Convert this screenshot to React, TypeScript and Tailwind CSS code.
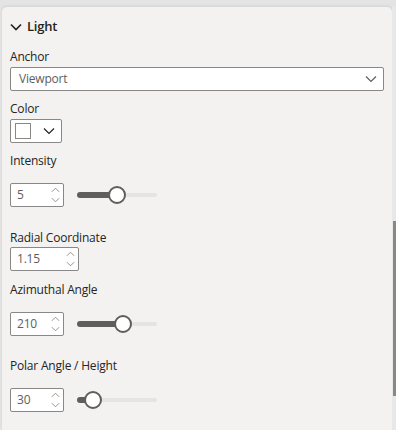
import { ReactNode } from "react";

const font = "font-['Segoe_UI','Open_Sans',sans-serif]";

function Chevron({ className, sw = 1.2 }: { className?: string; sw?: number }) {
  return (
    <svg viewBox="0 0 12 8" className={className} fill="none" stroke="currentColor" strokeWidth={sw}>
      <path d="M1 1.5 6 6.5 11 1.5" />
    </svg>
  );
}

function Label({ children, mt }: { children: ReactNode; mt: string }) {
  return (
    <div className={`h-[16px] text-[12px] leading-[19px] tracking-[-0.2px] text-[#252423] ${mt}`}>
      {children}
    </div>
  );
}

function Spin({ value, width }: { value: string; width: string }) {
  return (
    <div className={`relative h-[24px] ${width} border border-[#8a8886] rounded-[2px] bg-white flex items-center`}>
      <span className="pl-[6px] text-[12px] tracking-[-0.2px] text-[#605e5c]">{value}</span>
      <div className="absolute right-[3px] top-[3px] flex flex-col gap-[2px] text-[#8a8886]">
        <svg viewBox="0 0 10 6" className="w-[9px] h-[6px]" fill="none" stroke="currentColor" strokeWidth="1">
          <path d="M1 5 5 1 9 5" />
        </svg>
        <svg viewBox="0 0 10 6" className="w-[9px] h-[6px] mt-[2px]" fill="none" stroke="currentColor" strokeWidth="1">
          <path d="M1 1 5 5 9 1" />
        </svg>
      </div>
    </div>
  );
}

function Slider({ pos }: { pos: number }) {
  return (
    <div className="relative w-[80px] h-[16px] ml-[13px]">
      <div className="absolute left-0 right-0 top-[6px] h-[4px] rounded-full bg-[#e6e4e2]" />
      <div
        className="absolute left-0 top-[5px] h-[6px] rounded-full bg-[#605e5c]"
        style={{ width: pos }}
      />
      <div
        className="absolute top-0 w-[18px] h-[18px] -mt-[1px] rounded-full bg-white border-2 border-[#605e5c]"
        style={{ left: pos - 9 }}
      />
    </div>
  );
}

function SpinRow({ value, pos, mt }: { value: string; pos: number; mt: string }) {
  return (
    <div className={`flex items-center ${mt}`}>
      <Spin value={value} width="w-[54px]" />
      <Slider pos={pos} />
    </div>
  );
}

export default function App() {
  return (
    <div className={`w-[396px] h-[430px] bg-[#e4e4e4] flex pt-[7px] pl-[2px] overflow-hidden ${font}`}>
      <div className="w-[390px] h-full bg-[#f3f2f1] rounded-t-[5px] shadow-[0_-1px_3px_rgba(0,0,0,0.08)] pl-[8px] pr-[8px] pt-[12px]">
        <div className="flex items-center h-[16px] gap-[5px] text-[#252423]">
          <Chevron className="w-[12px] h-[8px]" sw={1.7} />
          <span className="text-[13px] font-semibold tracking-[-0.2px]">Light</span>
        </div>

        <Label mt="mt-[12px]">Anchor</Label>
        <div className="mt-[4px] h-[24px] w-[374px] border border-[#8a8886] rounded-[2px] bg-white flex items-center justify-between pl-[8px] pr-[6px]">
          <span className="text-[12px] tracking-[-0.2px] text-[#605e5c]">Viewport</span>
          <Chevron className="w-[12px] h-[8px] text-[#605e5c]" />
        </div>

        <Label mt="mt-[8px]">Color</Label>
        <div className="mt-[4px] h-[24px] w-[52px] border border-[#8a8886] rounded-[2px] bg-white flex items-center pl-[4px] gap-[12px]">
          <div className="w-[16px] h-[16px] border border-[#8a8886] bg-white" />
          <Chevron className="w-[12px] h-[8px] text-[#252423]" />
        </div>

        <Label mt="mt-[8px]">Intensity</Label>
        <SpinRow value="5" pos={40} mt="mt-[16px]" />

        <Label mt="mt-[21px]">Radial Coordinate</Label>
        <div className="mt-[3px]">
          <Spin value="1.15" width="w-[69px]" />
        </div>

        <Label mt="mt-[9px]">Azimuthal Angle</Label>
        <SpinRow value="210" pos={46} mt="mt-[16px]" />

        <Label mt="mt-[20px]">Polar Angle / Height</Label>
        <SpinRow value="30" pos={16} mt="mt-[16px]" />
      </div>
      <div className="w-[4px] h-full bg-[#e8e8e8] pt-[214px]">
        <div className="ml-[1px] w-[3px] h-[175px] bg-[#8a8886]" />
      </div>
    </div>
  );
}
